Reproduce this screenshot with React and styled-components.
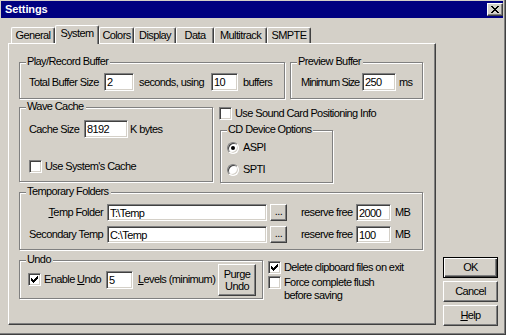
import React from 'react';
import styled, { createGlobalStyle } from 'styled-components';

const Global = createGlobalStyle`
  html, body { margin: 0; padding: 0; background: #d4d0c8; }
  * { box-sizing: border-box; }
`;

const Win = styled.div`
  width: 506px;
  height: 335px;
  background: #d4d0c8;
  border-right: 1px solid #404040;
  border-bottom: 1px solid #404040;
  box-shadow: inset -1px -1px 0 #808080;
  padding: 1px 2px 2px 1px;
  display: flex;
  flex-direction: column;
  overflow: hidden;
  font-family: "Liberation Sans", Arial, sans-serif;
  font-size: 11px;
  letter-spacing: -0.6px;
  color: #000;
`;

const TitleBar = styled.div`
  height: 17px;
  background: #000080;
  display: flex;
  align-items: center;
  justify-content: space-between;
  padding: 0 0 0 4px;
`;

const Title = styled.span`
  color: #fff;
  font-weight: bold;
  letter-spacing: -0.1px;
  line-height: 13px;
`;

const CloseBtn = styled.div`
  width: 16px;
  height: 13px;
  background: #d4d0c8;
  border: 1px solid;
  border-color: #fff #404040 #404040 #fff;
  box-shadow: inset -1px -1px 0 #808080;
  display: flex;
  align-items: center;
  justify-content: center;
  padding-right: 1px;
`;

const XGlyph = () => (
  <svg width="8" height="7" viewBox="0 0 8 7" shapeRendering="crispEdges">
    <path
      fill="#000"
      d="M0 0h2v1H0zM6 0h2v1H6zM1 1h2v1H1zM5 1h2v1H5zM2 2h4v1H2zM3 3h2v1H3zM2 4h4v1H2zM1 5h2v1H1zM5 5h2v1H5zM0 6h2v1H0zM6 6h2v1H6z"
    />
  </svg>
);

const Body = styled.div`
  display: flex;
  padding: 7px 0 0 7px;
`;

const TabArea = styled.div`
  display: flex;
  flex-direction: column;
  width: 428px;
`;

const TabStrip = styled.div`
  display: flex;
  align-items: flex-end;
  height: 18px;
  padding-left: 3px;
`;

const Tab = styled.div`
  position: relative;
  z-index: ${(p) => (p.$active ? 2 : 0)};
  width: ${(p) => p.$w}px;
  height: ${(p) => (p.$active ? 19 : 16)}px;
  margin-bottom: ${(p) => (p.$active ? -1 : 0)}px;
  background: #d4d0c8;
  border: 1px solid;
  border-bottom: none;
  border-color: #fff #404040 #d4d0c8 #fff;
  border-radius: 2px 2px 0 0;
  box-shadow: inset -1px 0 0 #808080;
  display: flex;
  align-items: center;
  justify-content: center;
  padding-bottom: ${(p) => (p.$active ? 3 : 0)}px;
  line-height: 13px;
  white-space: nowrap;
`;

const Panel = styled.div`
  width: 428px;
  height: 282px;
  border: 1px solid;
  border-color: #fff #404040 #404040 #fff;
  box-shadow: inset -1px -1px 0 #808080;
  padding: 18px 0 0 10px;
  display: flex;
  flex-direction: column;
`;

const Row = styled.div`
  display: flex;
  align-items: flex-start;
  margin-top: ${(p) => p.$mt || 0}px;
`;

const Col = styled.div`
  display: flex;
  flex-direction: column;
  margin-left: ${(p) => p.$ml || 0}px;
`;

const Group = styled.div`
  position: relative;
  width: ${(p) => p.$w}px;
  height: ${(p) => p.$h}px;
  margin-left: ${(p) => p.$ml || 0}px;
  margin-top: ${(p) => p.$mt || 0}px;
  border: 1px solid #808080;
  box-shadow: inset 1px 1px 0 #fff, 1px 1px 0 #fff;
  display: flex;
  flex-direction: column;
  padding-top: ${(p) => p.$pt || 0}px;
`;

const Legend = styled.span`
  position: absolute;
  top: -8px;
  left: 6px;
  padding: 0 2px 0 1px;
  background: #d4d0c8;
  line-height: 13px;
  white-space: nowrap;
`;

const Line = styled.div`
  display: flex;
  align-items: center;
  height: ${(p) => (p.$h ? `${p.$h}px` : 'auto')};
  margin-top: ${(p) => p.$mt || 0}px;
`;

const Text = styled.span`
  display: inline-block;
  line-height: 13px;
  white-space: nowrap;
  margin-left: ${(p) => p.$ml || 0}px;
  width: ${(p) => (p.$w ? `${p.$w}px` : 'auto')};
  text-align: ${(p) => (p.$right ? 'right' : 'left')};
  letter-spacing: ${(p) => (p.$ls != null ? `${p.$ls}px` : 'inherit')};
  flex: none;
`;

const Field = styled.input`
  flex: none;
  width: ${(p) => p.$w}px;
  height: ${(p) => p.$h || 18}px;
  margin: 0 0 0 ${(p) => p.$ml || 0}px;
  padding: 0 2px;
  background: #fff;
  border: 1px solid;
  border-color: #808080 #fff #fff #808080;
  box-shadow: inset 1px 1px 0 #404040, inset -1px -1px 0 #d4d0c8;
  font: inherit;
  letter-spacing: inherit;
  color: #000;
  outline: none;
`;

const Raised = styled.div`
  flex: none;
  width: ${(p) => p.$w}px;
  height: ${(p) => p.$h}px;
  margin-left: ${(p) => p.$ml || 0}px;
  background: #d4d0c8;
  border: 1px solid;
  border-color: ${(p) => (p.$default ? '#000' : '#fff #404040 #404040 #fff')};
  box-shadow: ${(p) =>
    p.$default
      ? 'inset 1px 1px 0 #fff, inset -1px -1px 0 #404040, inset -2px -2px 0 #808080'
      : 'inset -1px -1px 0 #808080'};
  display: flex;
  flex-direction: column;
  align-items: center;
  justify-content: center;
  line-height: ${(p) => p.$lh || 13}px;
  text-align: center;
  padding-bottom: ${(p) => p.$pb || 0}px;
  white-space: nowrap;
`;

const ButtonCol = styled.div`
  display: flex;
  flex-direction: column;
  gap: 3px;
  margin-left: 7px;
  align-self: flex-end;
  margin-bottom: -1px;
`;

const Box = styled.span`
  flex: none;
  width: 13px;
  height: 13px;
  margin-left: ${(p) => p.$ml || 0}px;
  margin-top: ${(p) => p.$mt || 0}px;
  background: #fff;
  border: 1px solid;
  border-color: #808080 #fff #fff #808080;
  box-shadow: inset 1px 1px 0 #404040, inset -1px -1px 0 #d4d0c8;
  display: flex;
  align-items: center;
  justify-content: center;
`;

const CheckGlyph = () => (
  <svg width="7" height="7" viewBox="0 0 7 7" shapeRendering="crispEdges">
    <path
      fill="#000"
      d="M6 0h1v1H6zM5 1h2v1H5zM0 2h1v1H0zM4 2h3v1H4zM0 3h2v1H0zM3 3h3v1H3zM0 4h5v1H0zM1 5h3v1H1zM2 6h1v1H2z"
    />
  </svg>
);

const CheckRow = styled.div`
  display: flex;
  align-items: ${(p) => (p.$top ? 'flex-start' : 'center')};
  margin-top: ${(p) => p.$mt || 0}px;
  margin-left: ${(p) => p.$ml || 0}px;
`;

const Check = ({ checked, children, ml, mt, top }) => (
  <CheckRow $ml={ml} $mt={mt} $top={top}>
    <Box>{checked && <CheckGlyph />}</Box>
    <Text $ml={3}>{children}</Text>
  </CheckRow>
);

const RadioDot = styled.span`
  position: relative;
  flex: none;
  width: 12px;
  height: 12px;
  border-radius: 50%;
  background: #fff;
  border: 1px solid;
  border-color: #808080 #fff #fff #808080;
  box-shadow: inset 1px 1px 0 #404040, inset -1px -1px 0 #d4d0c8;
  &::after {
    content: '';
    display: ${(p) => (p.$checked ? 'block' : 'none')};
    position: absolute;
    left: 3px;
    top: 3px;
    width: 4px;
    height: 4px;
    border-radius: 50%;
    background: #000;
  }
`;

const Radio = ({ checked, children, mt }) => (
  <CheckRow $ml={6} $mt={mt}>
    <RadioDot $checked={checked} />
    <Text $ml={4}>{children}</Text>
  </CheckRow>
);

const tabs = [
  ['General', 44],
  ['System', 44, true],
  ['Colors', 35],
  ['Display', 42],
  ['Data', 38],
  ['Multitrack', 53],
  ['SMPTE', 44],
];

const FolderRow = ({ label, value, free, mt }) => (
  <Line $mt={mt}>
    <Text $ml={9} $w={74} $right>
      {label}
    </Text>
    <Field $ml={4} $w={160} $h={17} readOnly value={value} />
    <Raised $ml={3} $w={17} $h={17} $pb={2}>
      ...
    </Raised>
    <Text $ml={14} $w={52}>
      reserve free
    </Text>
    <Field $ml={3} $w={35} $h={17} readOnly value={free} />
    <Text $ml={4}>MB</Text>
  </Line>
);

export default function App() {
  return (
    <>
      <Global />
      <Win>
        <TitleBar>
          <Title>Settings</Title>
          <CloseBtn>
            <XGlyph />
          </CloseBtn>
        </TitleBar>
        <Body>
          <TabArea>
            <TabStrip>
              {tabs.map(([name, w, active]) => (
                <Tab key={name} $w={w} $active={active}>
                  {name}
                </Tab>
              ))}
            </TabStrip>
            <Panel>
              <Row>
                <Group $w={266} $h={37} $pt={10}>
                  <Legend>Play/Record Buffer</Legend>
                  <Line>
                    <Text $ml={9} $w={72}>Total Buffer Size</Text>
                    <Field $ml={3} $w={30} readOnly value="2" />
                    <Text $ml={5} $w={67}>seconds, using</Text>
                    <Field $ml={5} $w={27} readOnly value="10" />
                    <Text $ml={5}>buffers</Text>
                  </Line>
                </Group>
                <Group $w={133} $h={37} $ml={5} $pt={10}>
                  <Legend>Preview Buffer</Legend>
                  <Line>
                    <Text $ml={10} $w={58} $ls={-0.9}>Minimum Size</Text>
                    <Field $ml={3} $w={34} readOnly value="250" />
                    <Text $ml={3}>ms</Text>
                  </Line>
                </Group>
              </Row>

              <Row $mt={8}>
                <Group $w={194} $h={75} $pt={12}>
                  <Legend>Wave Cache</Legend>
                  <Line>
                    <Text $ml={9} $w={52}>Cache Size</Text>
                    <Field $ml={3} $w={44} readOnly value="8192" />
                    <Text $ml={2}>K bytes</Text>
                  </Line>
                  <Check ml={9} mt={22}>
                    Use System's Cache
                  </Check>
                </Group>
                <Col $ml={6}>
                  <Check>Use Sound Card Positioning Info</Check>
                  <Group $w={113} $h={53} $ml={1} $mt={10} $pt={10}>
                    <Legend>CD Device Options</Legend>
                    <Radio checked>ASPI</Radio>
                    <Radio mt={9}>SPTI</Radio>
                  </Group>
                </Col>
              </Row>

              <Row $mt={9}>
                <Group $w={404} $h={58} $pt={11}>
                  <Legend>Temporary Folders</Legend>
                  <FolderRow
                    label={
                      <>
                        <u>T</u>emp Folder
                      </>
                    }
                    value="T:\Temp"
                    free="2000"
                  />
                  <FolderRow label="Secondary Temp" value="C:\Temp" free="100" mt={5} />
                </Group>
              </Row>

              <Row $mt={10}>
                <Group $w={244} $h={39}>
                  <Legend>Undo</Legend>
                  <Line $h={37}>
                    <Box $ml={8}>
                      <CheckGlyph />
                    </Box>
                    <Text $ml={3} $w={59}>
                      Enable <u>U</u>ndo
                    </Text>
                    <Field $ml={3} $w={27} readOnly value="5" />
                    <Text $ml={5} $w={75}>
                      <u>L</u>evels (minimum)
                    </Text>
                    <Raised $ml={5} $w={38} $h={32} $lh={12}>
                      <span>Purge</span>
                      <span>Undo</span>
                    </Raised>
                  </Line>
                </Group>
                <Col $ml={5}>
                  <Check checked mt={1} top>
                    Delete clipboard files on exit
                  </Check>
                  <Check mt={2} top>
                    Force complete flush
                    <br />
                    before saving
                  </Check>
                </Col>
              </Row>
            </Panel>
          </TabArea>
          <ButtonCol>
            <Raised $w={55} $h={21} $default>
              OK
            </Raised>
            <Raised $w={55} $h={21}>
              Cancel
            </Raised>
            <Raised $w={55} $h={21}>
              <span>
                <u>H</u>elp
              </span>
            </Raised>
          </ButtonCol>
        </Body>
      </Win>
    </>
  );
}
